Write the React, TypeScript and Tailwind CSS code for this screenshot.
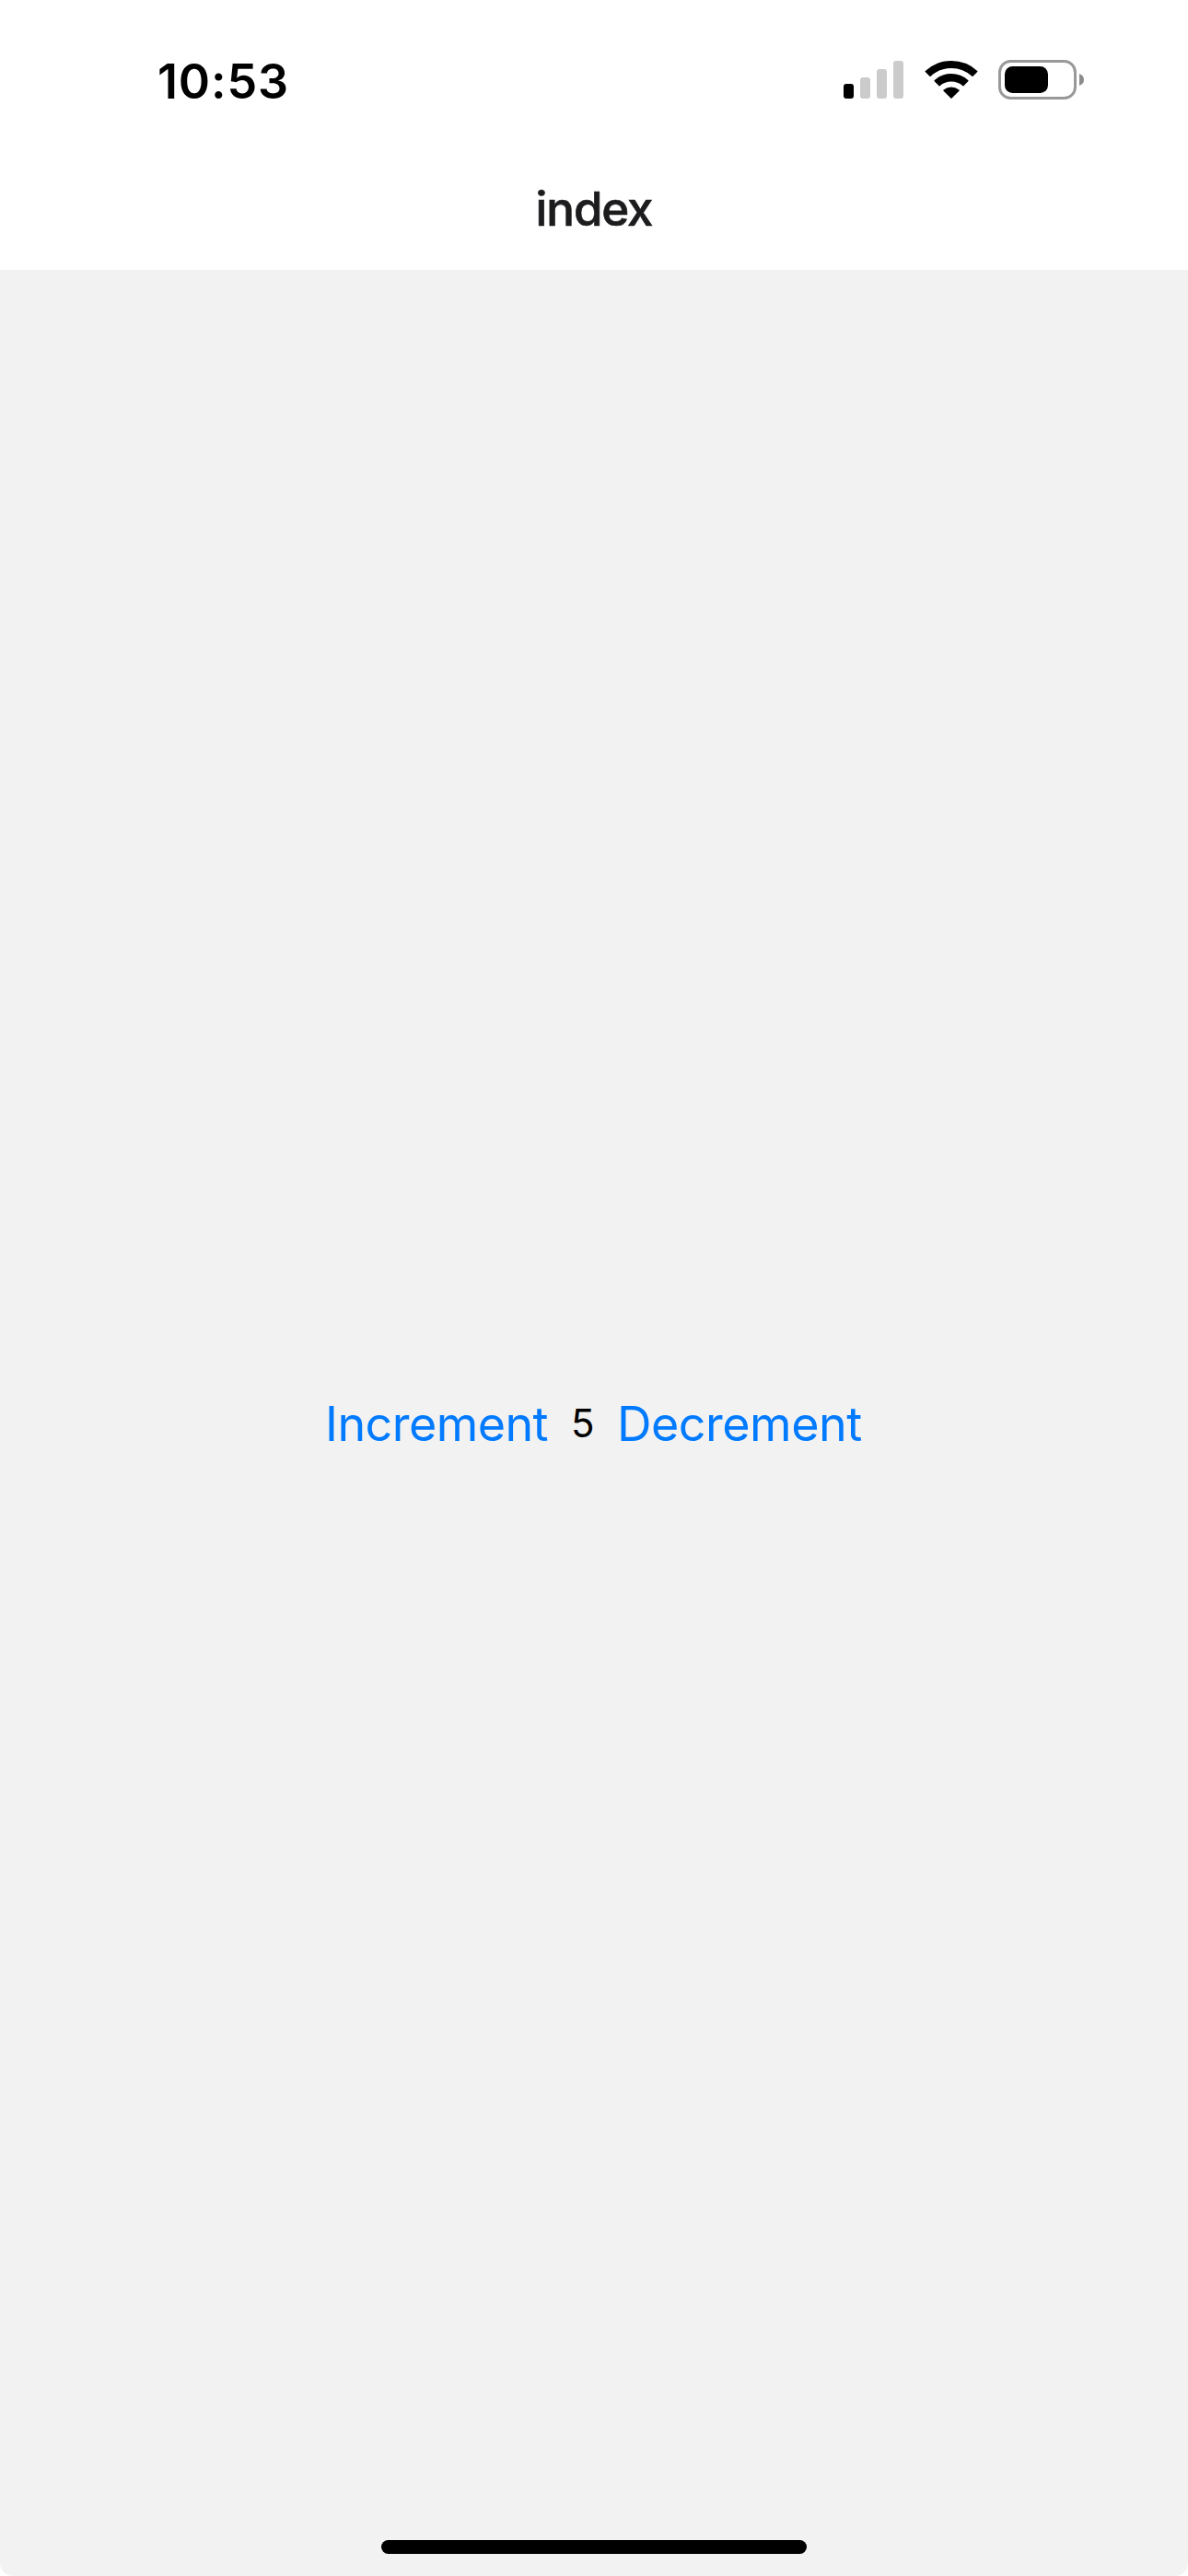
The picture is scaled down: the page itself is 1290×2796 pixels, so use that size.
import React, { useState } from "react";

function SignalIcon() {
  return (
    <svg className="h-[42px] w-[66px]" viewBox="0 0 66 42">
      <rect x="0" y="25" width="11" height="16" rx="3" fill="#000" />
      <rect x="18" y="18" width="11" height="23" rx="3" fill="#cbcbcb" />
      <rect x="36" y="9" width="11" height="32" rx="3" fill="#cbcbcb" />
      <rect x="54" y="0" width="11" height="41" rx="3" fill="#cbcbcb" />
    </svg>
  );
}

function WifiIcon() {
  return (
    <svg className="h-[42px] w-[58px]" viewBox="0 0 174 126" fill="#000" stroke="#000" strokeWidth="5" strokeLinejoin="round">
      <path d="M4 37.5 A123.5 123.5 0 0 1 170 37.5 L156 51.5 A101.5 101.5 0 0 0 18 51.5 Z" />
      <path d="M34 68 A79.5 79.5 0 0 1 140 68 L126 82.5 A59.5 59.5 0 0 0 48 82.5 Z" />
      <path d="M63.5 99.5 A37.5 37.5 0 0 1 110.5 99.5 L87 123 Z" />
    </svg>
  );
}

function BatteryIcon() {
  return (
    <svg className="h-[43px] w-[94px]" viewBox="0 0 94 43">
      <rect x="1.5" y="1.5" width="82" height="40" rx="12" fill="none" stroke="#999" strokeWidth="3" />
      <rect x="7" y="7" width="47" height="29" rx="8.5" fill="#000" />
      <path d="M88 15 Q93 17 93 21.5 Q93 26 88 28 Z" fill="#8c8c8c" />
    </svg>
  );
}

export default function App() {
  const [count, setCount] = useState(5);

  return (
    <div className="flex h-[2796px] w-[1290px] flex-col bg-white font-[Inter,sans-serif]">
      <div className="flex h-[176px] shrink-0 items-start justify-between pl-[171px] pr-[112px]">
        <span className="pt-[63px] text-[52px] leading-none font-semibold tracking-[0.85px] text-black">10:53</span>
        <div className="flex items-start pt-[65px]">
          <div className="mt-px mr-[22px]"><SignalIcon /></div>
          <div className="mr-[22px]"><WifiIcon /></div>
          <BatteryIcon />
        </div>
      </div>
      <header className="flex h-[117px] shrink-0 items-center justify-center pb-[16px]">
        <h1 className="text-[51px] leading-none font-medium tracking-[-1.1px] text-[#1c1c1e] [-webkit-text-stroke:0.7px_#1c1c1e]">index</h1>
      </header>
      <main className="flex min-h-0 flex-1 flex-col rounded-b-[14px] bg-[#f2f2f2]">
        <div className="flex flex-1 items-center pl-[353px] pt-[41px]">
          <button className="w-[267px] text-left text-[52px] leading-none tracking-[-0.55px] text-[#007aff]" onClick={() => setCount(count + 1)}>
            Increment
          </button>
          <span className="w-[50px] pb-[2px] text-[42px] leading-none text-black">{count}</span>
          <button className="text-left text-[52px] leading-none tracking-[-0.5px] text-[#007aff]" onClick={() => setCount(count - 1)}>
            Decrement
          </button>
        </div>
        <div className="mb-[24px] h-[15px] w-[462px] self-center rounded-full bg-black" />
      </main>
    </div>
  );
}
